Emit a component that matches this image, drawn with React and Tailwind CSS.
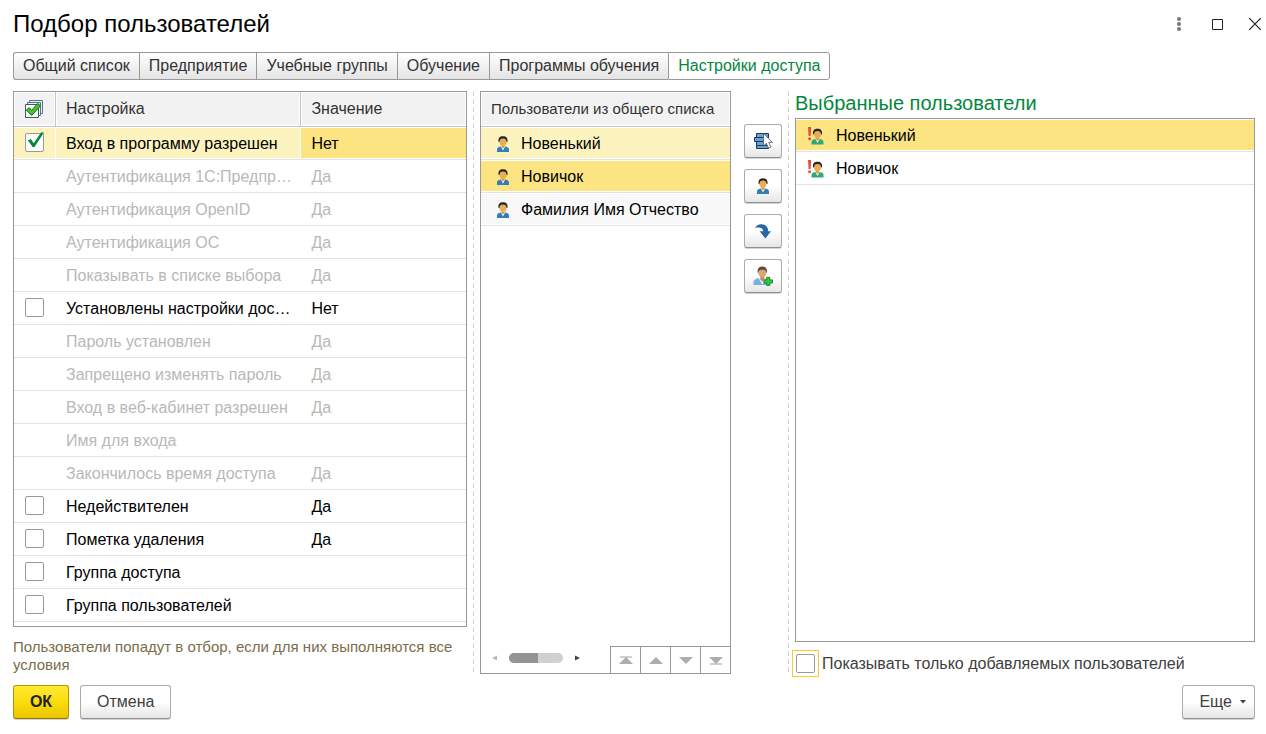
import React, { useState } from "react";

const TABS = [
  "Общий список",
  "Предприятие",
  "Учебные группы",
  "Обучение",
  "Программы обучения",
  "Настройки доступа",
];

const SETTINGS = [
  { name: "Вход в программу разрешен", value: "Нет", box: true, checked: true },
  { name: "Аутентификация 1С:Предпр…", value: "Да" },
  { name: "Аутентификация OpenID", value: "Да" },
  { name: "Аутентификация ОС", value: "Да" },
  { name: "Показывать в списке выбора", value: "Да" },
  { name: "Установлены настройки дос…", value: "Нет", box: true },
  { name: "Пароль установлен", value: "Да" },
  { name: "Запрещено изменять пароль", value: "Да" },
  { name: "Вход в веб-кабинет разрешен", value: "Да" },
  { name: "Имя для входа", value: "" },
  { name: "Закончилось время доступа", value: "Да" },
  { name: "Недействителен", value: "Да", box: true },
  { name: "Пометка удаления", value: "Да", box: true },
  { name: "Группа доступа", value: "", box: true },
  { name: "Группа пользователей", value: "", box: true },
];

const USERS = [
  { name: "Новенький", bg: "bg-[#fcf3bf]" },
  { name: "Новичок", bg: "bg-[#fde483]" },
  { name: "Фамилия Имя Отчество", bg: "bg-[#f8f8f8]" },
];

const HEAD =
  "h-[35px] border-b border-[#c4c4c4] bg-[#f2f2f2] px-[10px] text-left font-normal text-[#333] shadow-[inset_0_0_0_1px_#fff] whitespace-nowrap overflow-hidden";
const CELL =
  "h-[33px] border-b border-[#e2e2e2] shadow-[inset_0_1px_0_#fff,inset_0_-1px_0_#fff] whitespace-nowrap overflow-hidden";
const TEXT_CELL = CELL + " px-[10px] pt-[2px]";
const BOX_CELL = CELL + " pl-[11px] pb-px";
const BUTTON =
  "flex items-center justify-center rounded-[3px] border border-[#ababab] border-b-[#8f8f8f] bg-linear-to-b from-white from-50% to-[#e6e6e6] shadow-[0_1px_0_#d4d4d4]";

function PersonShape({ body }) {
  return (
    <>
      <path d="M0 16v-2.200C0 11.800 1.300 11 3.600 10.600L6 12l2.400-1.400C10.700 11 12 11.800 12 13.800V16z" fill={body} />
      <path d="M4 10.700 6 14.500l2-3.800z" fill="#fff" />
      <path d="M4.400 8.500h3.200v2.400L6 12.600l-1.600-1.700z" fill="#dc9a45" />
      <ellipse cx="6" cy="5.600" rx="3.700" ry="4.600" fill="#eaac55" />
      <path d="M1.600 6C.8 2.200 2.800.2 6 .2S11.200 2.200 10.400 6l-.9-.2C9.400 3.600 8.300 2.400 6 2.400S2.600 3.600 2.500 5.800z" fill="#262626" />
    </>
  );
}

function Person() {
  return (
    <svg width="12" height="16" viewBox="0 0 12 16" aria-hidden="true">
      <PersonShape body="#2f80b9" />
    </svg>
  );
}

function AlertPerson() {
  return (
    <svg width="16" height="18" viewBox="0 0 16 18" aria-hidden="true">
      <path d="M0 0h3.200l-.6 9H.6z" fill="#e2503c" />
      <circle cx="1.600" cy="11.800" r="1.500" fill="#e2503c" />
      <g transform="translate(3.500 1.500)">
        <PersonShape body="#30a878" />
      </g>
    </svg>
  );
}

function PickRows() {
  return (
    <svg width="20" height="20" viewBox="0 0 20 20" aria-hidden="true">
      <g fill="#6aa2d2" stroke="#17395a" strokeWidth="1">
        <path d="M3.500 2.500h12v4h-12zM3.500 14.500h12v3h-12z" />
        <path d="M1.500 6.500h12v4h-12zM3.500 10.500h12v4h-12z" />
      </g>
      <path d="M10.500 2.500v12.500l2.800-2.700 2.100 4.700 2.500-1.100-2.100-4.500h3.700z" fill="#fff" stroke="#4a5662" strokeWidth=".8" />
    </svg>
  );
}

function CurvedArrow() {
  return (
    <svg width="16" height="15" viewBox="0 0 16 15" aria-hidden="true">
      <path d="M0 3.800C1.500 1.200 3.700 0 6.500.2 11 .5 13 3 13.200 7.200H16L10.400 14.500 4.600 7.200h3.600C8 4.400 6 2.600 0 3.800z" fill="#2568a4" />
    </svg>
  );
}

function AddPerson() {
  return (
    <svg width="20" height="20" viewBox="0 0 20 20" aria-hidden="true">
      <path d="M.5 19v-2.500c0-2.700 2-3.800 5.500-4.500h6c3.500.7 4.500 2 4.500 4.500V19z" fill="#79aee6" />
      <path d="m5.500 12 3.800 6.500L13 12z" fill="#f2f6fb" />
      <path d="M7.300 9.500h4v3.700l-2 2.800-2-2.800z" fill="#c98a50" />
      <ellipse cx="9.300" cy="6.500" rx="4" ry="5" fill="#e0a56c" />
      <path d="M4.800 7.500C3.800 2.700 5.800.5 9.300.5s5.500 2.200 4.500 7l-.9-2.600c-1-1.700-6.200-1.700-7.200 0z" fill="#5c4b43" />
      <path d="M13.700 11.300h3.100v2.600h2.700v3.100h-2.700v2.600h-3.100V17H11v-3.100h2.700z" fill="#34c63c" stroke="#128422" strokeWidth=".9" />
    </svg>
  );
}

function CheckAll() {
  return (
    <svg width="20" height="20" viewBox="0 0 20 20" aria-hidden="true">
      <g fill="#e8eef2" stroke="#5c7387" strokeWidth="1">
        <path d="M5.500 1.500h13v13h-13z" />
        <path d="M3.500 3.500h13v13h-13z" />
        <path d="M1.500 5.500h13v13h-13z" fill="#fff" stroke="#40586c" />
      </g>
      <path d="m2.300 11 3-2.300 2.200 2.800 6.300-7.100 2.600 2.400-8.700 9.700z" fill="#42c922" stroke="#176516" strokeWidth="1" />
    </svg>
  );
}

function Box({ label, id, initial = false }) {
  const [on, setOn] = useState(initial);
  return (
    <span className="relative flex h-[19px] w-[19px]">
      <input
        id={id}
        type="checkbox"
        aria-label={label}
        checked={on}
        onChange={(e) => setOn(e.target.checked)}
        className="h-[19px] w-[19px] appearance-none rounded-[2px] border border-[#999] bg-white outline-none"
      />
      {on && (
        <svg className="pointer-events-none absolute -top-px left-0" width="20" height="20" viewBox="0 0 20 20" aria-hidden="true">
          <path d="m2.800 8.300 3.100-1.300 2.800 4.200L16 .6h3L9.500 15H7.600z" fill="#04873c" />
        </svg>
      )}
    </span>
  );
}

function Divider() {
  return <div className="w-px bg-[repeating-linear-gradient(to_bottom,#d0d0d0_0_5px,transparent_5px_8px)]" />;
}

export default function App() {
  return (
    <main className="bg-white pr-[11px] pb-4 pl-[13px] font-['Liberation_Sans',Arial,sans-serif] text-[16px] leading-[18px] text-black">
      <header className="flex h-[52px] items-center justify-between pb-1">
        <h1 className="text-[24px] leading-[28px]">Подбор пользователей</h1>
        <div className="-mr-2 flex items-center gap-[22px]">
          <button aria-label="Меню" className="flex w-4 justify-center">
            <svg width="4" height="14" viewBox="0 0 4 14" fill="#777"><circle cx="2" cy="2" r="2" /><circle cx="2" cy="7" r="2" /><circle cx="2" cy="12" r="2" /></svg>
          </button>
          <button aria-label="Развернуть" className="flex w-4 justify-center">
            <svg width="12" height="12" viewBox="0 0 12 12"><path d="M1.500 1.500h10v10h-10z" fill="none" stroke="#222" /></svg>
          </button>
          <button aria-label="Закрыть" className="flex w-4 justify-center">
            <svg width="12" height="12" viewBox="0 0 12 12"><path d="m0 0 12 12M12 0 0 12" stroke="#222" strokeWidth="1.200" /></svg>
          </button>
        </div>
      </header>

      <nav className="flex">
        {TABS.map((tab, i) => {
          const active = i === TABS.length - 1;
          return (
            <button
              key={tab}
              className={
                "h-7 border-y border-l border-[#999] px-[9px] whitespace-nowrap first:rounded-l-[3px] last:rounded-r-[3px] last:border-r " +
                (active ? "bg-white text-[#04873c]" : "bg-linear-to-b from-white to-[#e4e4e4] text-[#333]")
              }
            >
              {tab}
            </button>
          );
        })}
      </nav>

      <section className="mt-[11px] grid grid-cols-[minmax(0,454fr)_13px_minmax(0,251fr)_64px_minmax(0,460fr)]">
        <div>
          <div className="border border-[#999] pb-1">
            <table className="w-full table-fixed border-separate border-spacing-0">
              <thead>
                <tr>
                  <th className={HEAD + " w-[42px] border-r"}>
                    <CheckAll />
                  </th>
                  <th className={HEAD + " w-[54.3%] border-r"}>Настройка</th>
                  <th className={HEAD}>Значение</th>
                </tr>
              </thead>
              <tbody>
                {SETTINGS.map((row, i) => {
                  const tone = row.box ? "text-black" : "text-[#b8b8b8]";
                  const pale = i === 0 ? " border-r border-r-white bg-[#fcf3bf]" : "";
                  return (
                    <tr key={row.name} className={tone}>
                      <td className={BOX_CELL + pale}>
                        {row.box && <Box label={row.name} initial={row.checked} />}
                      </td>
                      <td className={TEXT_CELL + pale}>{row.name}</td>
                      <td className={TEXT_CELL + (i === 0 ? " bg-[#fde483]" : "")}>{row.value}</td>
                    </tr>
                  );
                })}
              </tbody>
            </table>
          </div>
          <p className="mt-[11px] text-[15px] text-[#7a6d48]">Пользователи попадут в отбор, если для них выполняются все условия</p>
        </div>

        <div className="flex justify-center"><Divider /></div>

        <div className="flex flex-col justify-between border border-[#999]">
          <table className="w-full table-fixed border-separate border-spacing-0">
            <thead>
              <tr><th className={HEAD + " text-[15px]"}>Пользователи из общего списка</th></tr>
            </thead>
            <tbody>
              {USERS.map((user) => (
                <tr key={user.name}>
                  <td className={TEXT_CELL + " " + user.bg}>
                    <div className="flex items-center gap-3 pl-[6px]">
                      <Person />
                      {user.name}
                    </div>
                  </td>
                </tr>
              ))}
            </tbody>
          </table>
          <div className="flex h-[26px]">
            <div className="flex flex-1 items-center gap-3 pb-1 pl-[11px]">
              <svg width="5" height="6" viewBox="0 0 5 6"><path d="M5 .5v5L0 3z" fill="#b8b8b8" /></svg>
              <div className="h-[10px] w-[54px] rounded-full bg-[#d0d0d0]">
                <div className="h-full w-[29px] rounded-l-full bg-[#949494]" />
              </div>
              <svg width="5" height="6" viewBox="0 0 5 6"><path d="M0 .5v5L5 3z" fill="#444" /></svg>
            </div>
            {[
              ["В начало", "M8 2l7 7H1z", "M2 1h12v2H2z"],
              ["Вверх", "M8 2l7 7H1z", ""],
              ["Вниз", "M8 9l7-7H1z", ""],
              ["В конец", "M8 9l7-7H1z", "M2 8h12v2H2z"],
            ].map(([label, arrow, bar]) => (
              <button key={label} aria-label={label} className="-mt-px flex w-[30px] items-center justify-center border-t border-l border-[#999]">
                <svg width="16" height="11" viewBox="0 0 16 11">
                  <path d={bar} fill="#cfcfcf" />
                  <path d={arrow} fill="#adadad" />
                </svg>
              </button>
            ))}
          </div>
        </div>

        <div className="flex gap-[6px] pl-[13px]">
          <div className="flex flex-col gap-[11px] pt-[33px]">
            <button aria-label="Выбрать все" className={BUTTON + " h-[34px] w-[38px]"}><PickRows /></button>
            <button aria-label="Пользователь" className={BUTTON + " h-[34px] w-[38px]"}><Person /></button>
            <button aria-label="Перенести" className={BUTTON + " h-[34px] w-[38px]"}><CurvedArrow /></button>
            <button aria-label="Добавить пользователя" className={BUTTON + " h-[34px] w-[38px]"}><AddPerson /></button>
          </div>
          <Divider />
        </div>

        <div className="-mb-[3px] flex flex-col">
          <h2 className="h-[27px] text-[20px] leading-[24px] text-[#04873c]">Выбранные пользователи</h2>
          <div className="flex-1 border border-[#999]">
            <table className="w-full table-fixed border-separate border-spacing-0">
              <tbody>
                {["Новенький", "Новичок"].map((name, i) => (
                  <tr key={name}>
                    <td className={TEXT_CELL + (i === 0 ? " bg-[#fde483]" : "")}>
                      <div className="flex items-center gap-3 pl-[2px]">
                        <AlertPerson />
                        {name}
                      </div>
                    </td>
                  </tr>
                ))}
              </tbody>
            </table>
          </div>
          <div className="mt-2 -ml-[3px] flex items-center gap-[3px] text-[#404040]">
            <span className="border border-[#fbc82f] p-[3px]"><Box id="only-added" /></span>
            <label htmlFor="only-added">Показывать только добавляемых пользователей</label>
          </div>
        </div>
      </section>

      <footer className="mt-[11px] flex justify-between">
        <div className="flex gap-[11px]">
          <button className="h-[34px] w-14 rounded-[3px] border border-[#b09410] border-b-[#8d7506] bg-linear-to-b from-[#ffe92e] via-[#fbdc0c] to-[#eac500] font-bold text-[#222] shadow-[0_1px_0_#d4d4d4]">
            ОК
          </button>
          <button className={BUTTON + " h-[34px] px-4 text-[#404040]"}>Отмена</button>
        </div>
        <button className={BUTTON + " h-[34px] gap-2 pr-2 pl-4 text-[#404040]"}>
          Еще
          <svg width="6" height="4" viewBox="0 0 6 4"><path d="M0 0h6L3 3.500z" fill="#404040" /></svg>
        </button>
      </footer>
    </main>
  );
}
